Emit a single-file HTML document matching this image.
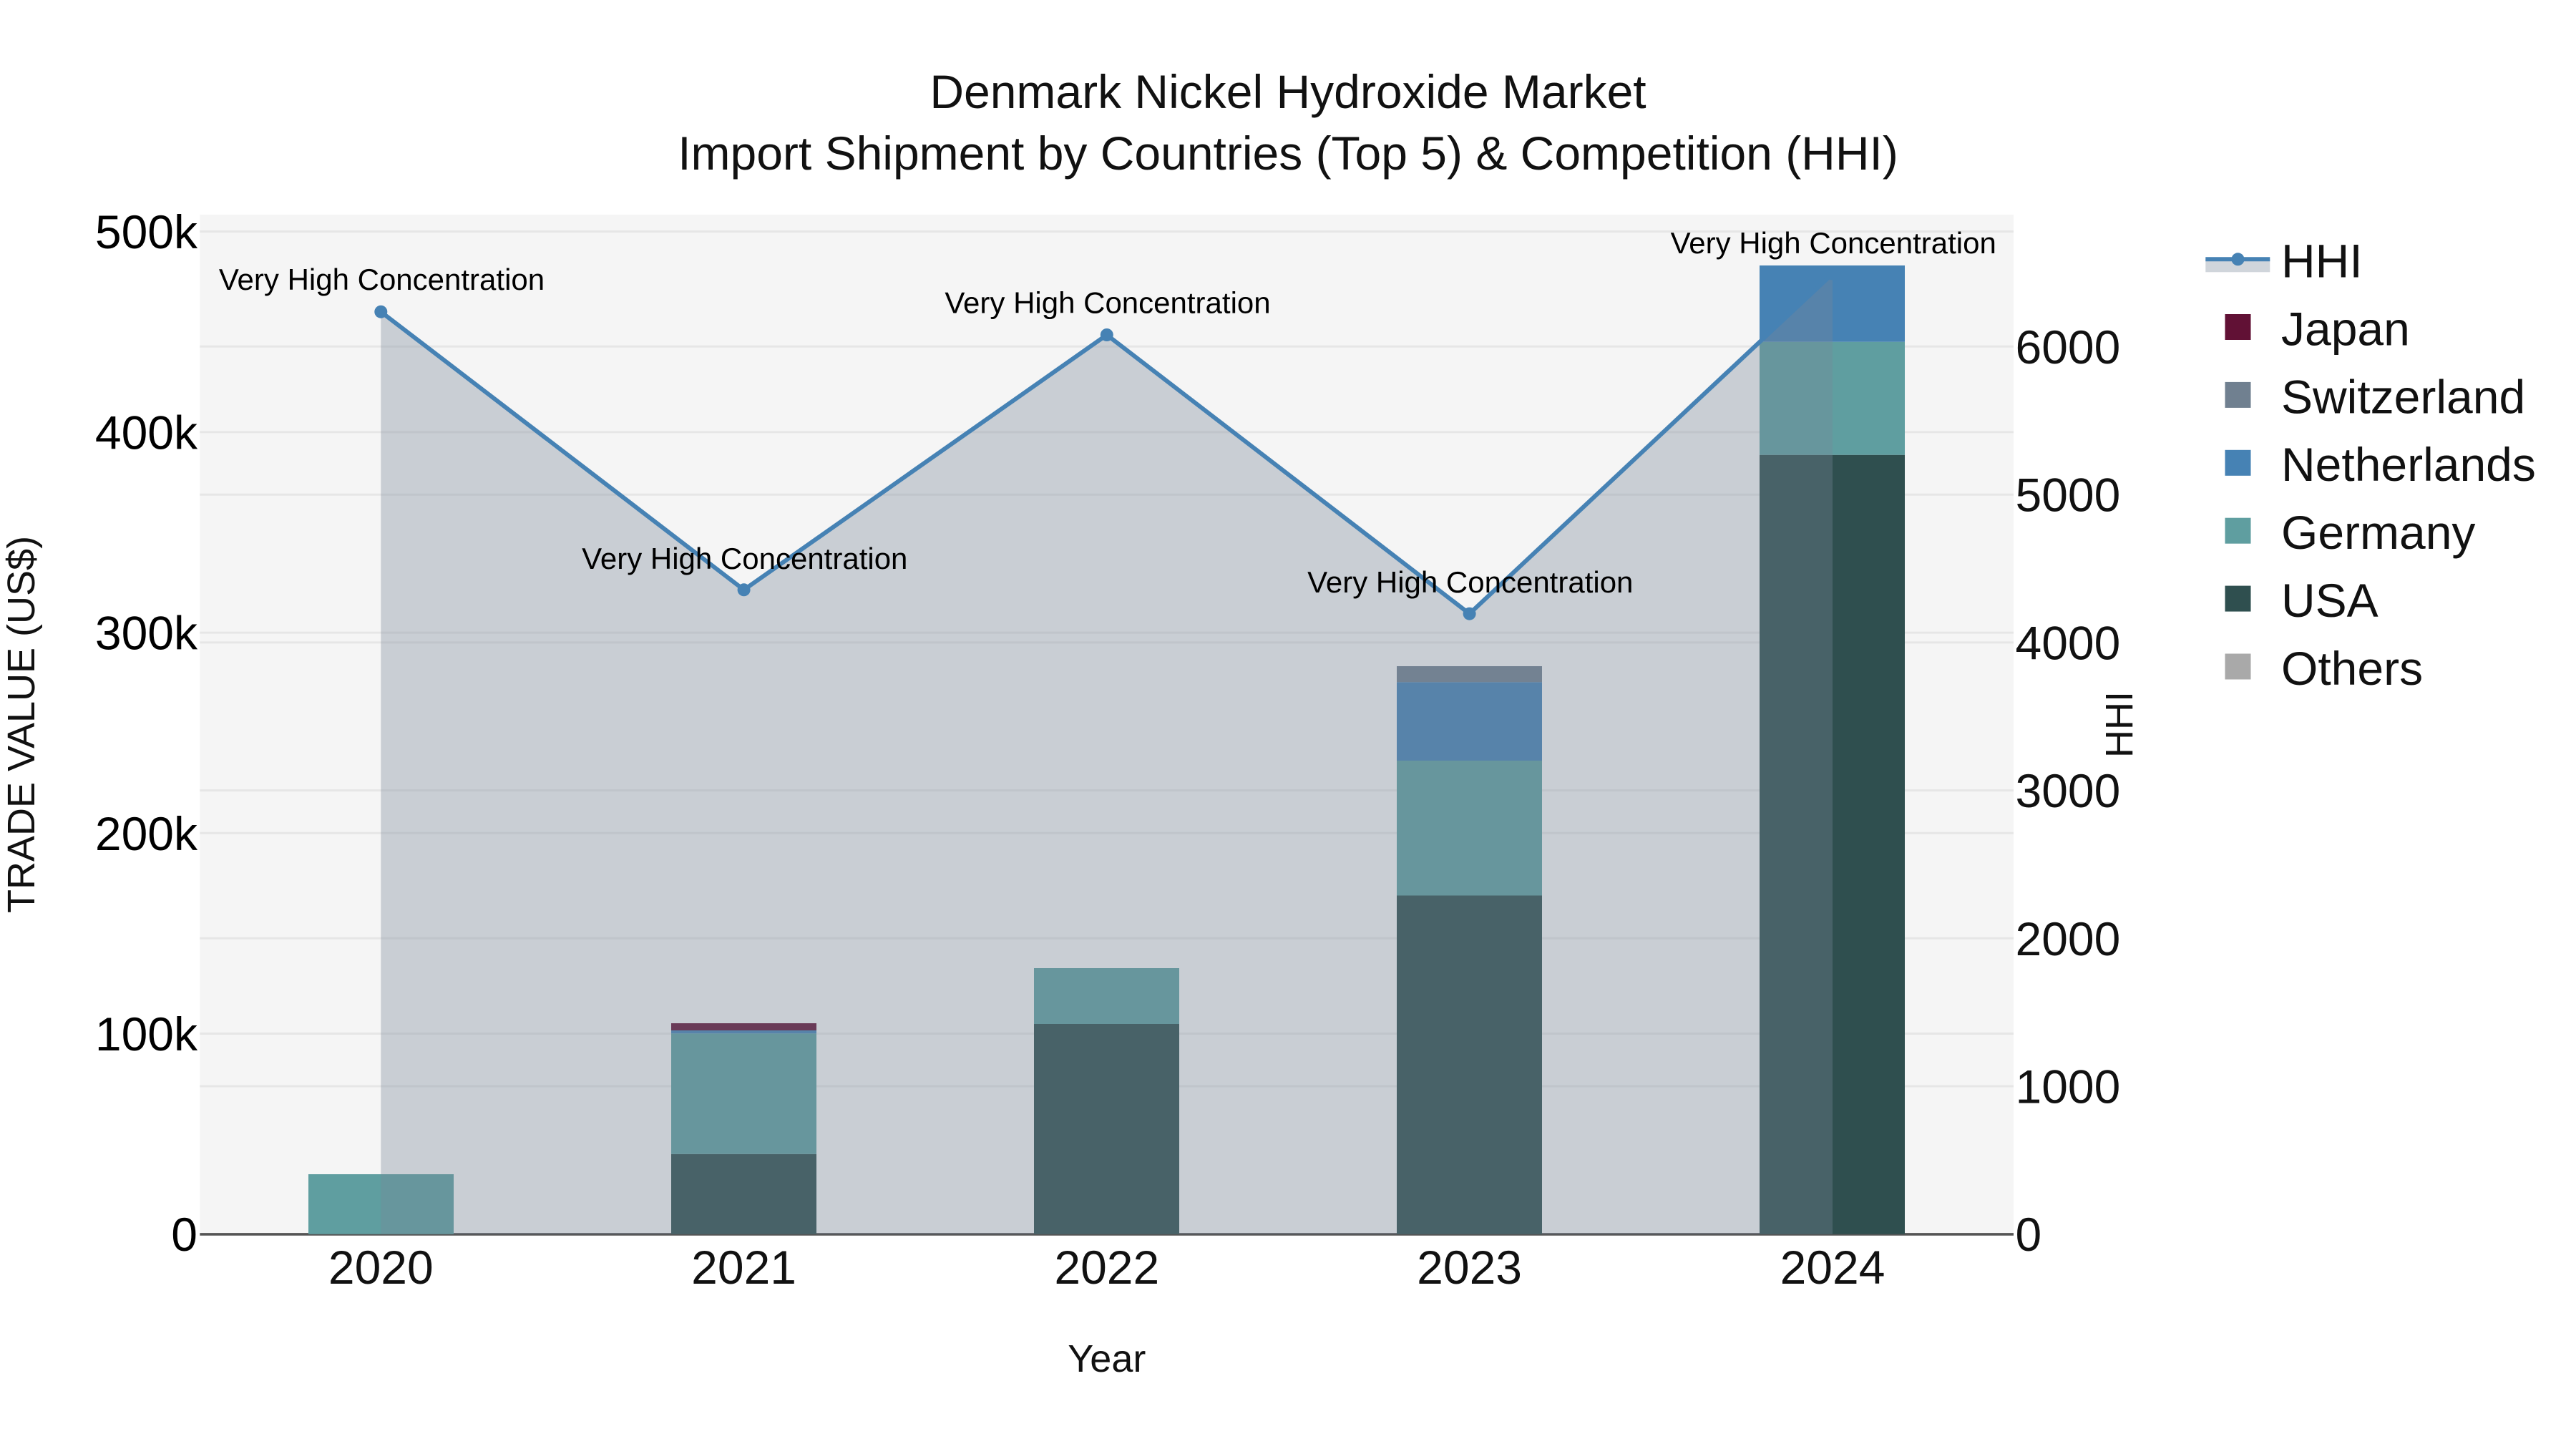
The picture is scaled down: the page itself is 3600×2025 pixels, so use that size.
<!DOCTYPE html>
<html><head><meta charset="utf-8"><style>
html,body{margin:0;padding:0;background:#fff;width:3600px;height:2025px;overflow:hidden}
svg{display:block}
text{font-family:"Liberation Sans",Arial,sans-serif}
.t{font-size:66px;fill:#111}
.a{font-size:42px;fill:#000;text-anchor:middle}
.yl{font-size:66px;fill:#000;text-anchor:end}
.yr{font-size:66px;fill:#111}
.x{font-size:66px;fill:#111;text-anchor:middle}
.l{font-size:66px;fill:#111}
.g{stroke:#e6e6e6;stroke-width:3}
</style></head><body>
<svg width="3600" height="2025" viewBox="0 0 3600 2025" xmlns="http://www.w3.org/2000/svg">
<rect width="3600" height="2025" fill="#fff"/>
<text class="t" x="1800" y="151" text-anchor="middle">Denmark Nickel Hydroxide Market</text>
<text class="t" x="1800" y="237" text-anchor="middle">Import Shipment by Countries (Top 5) &amp; Competition (HHI)</text>
<rect x="279.3" y="300" width="2534.7" height="1424.7" fill="#f5f5f5"/>
<g class="g">
<line x1="279.3" x2="2814" y1="323.5" y2="323.5"/>
<line x1="279.3" x2="2814" y1="603.9" y2="603.9"/>
<line x1="279.3" x2="2814" y1="884.1" y2="884.1"/>
<line x1="279.3" x2="2814" y1="1164.3" y2="1164.3"/>
<line x1="279.3" x2="2814" y1="1444.5" y2="1444.5"/>
<line x1="279.3" x2="2814" y1="484.3" y2="484.3"/>
<line x1="279.3" x2="2814" y1="691.2" y2="691.2"/>
<line x1="279.3" x2="2814" y1="897.9" y2="897.9"/>
<line x1="279.3" x2="2814" y1="1104.6" y2="1104.6"/>
<line x1="279.3" x2="2814" y1="1311.3" y2="1311.3"/>
<line x1="279.3" x2="2814" y1="1518" y2="1518"/>
</g>
<line x1="279.3" x2="2814" y1="1724.9" y2="1724.9" stroke="#555" stroke-width="3.6"/>
<!-- bars -->
<rect x="431" y="1641" width="203" height="83.7" fill="#5f9ea0"/>
<rect x="938" y="1612.8" width="203" height="111.9" fill="#2f4f4f"/>
<rect x="938" y="1444.3" width="203" height="168.5" fill="#5f9ea0"/>
<rect x="938" y="1440" width="203" height="4.3" fill="#4682b4"/>
<rect x="938" y="1430" width="203" height="10" fill="#611135"/>
<rect x="1445" y="1431" width="203" height="293.7" fill="#2f4f4f"/>
<rect x="1445" y="1353" width="203" height="78" fill="#5f9ea0"/>
<rect x="1952" y="1251.5" width="203" height="473.2" fill="#2f4f4f"/>
<rect x="1952" y="1063" width="203" height="188.5" fill="#5f9ea0"/>
<rect x="1952" y="953.3" width="203" height="109.7" fill="#4682b4"/>
<rect x="1952" y="931" width="203" height="22.3" fill="#708090"/>
<rect x="2459" y="635.7" width="203" height="1089" fill="#2f4f4f"/>
<rect x="2459" y="477.7" width="203" height="158" fill="#5f9ea0"/>
<rect x="2459" y="371" width="203" height="106.7" fill="#4682b4"/>
<!-- HHI area, line, markers -->
<polygon points="532.3,435.7 1039.6,824.3 1546.8,468 2053.6,857.7 2561,382.5 2561,1724.7 532.3,1724.7" fill="rgb(119,136,153)" fill-opacity="0.35"/>
<polyline points="532.3,435.7 1039.6,824.3 1546.8,468 2053.6,857.7 2561,382.5" fill="none" stroke="#4682b4" stroke-width="6" stroke-linejoin="round"/>
<g fill="#4682b4">
<circle cx="532.3" cy="435.7" r="9"/><circle cx="1039.6" cy="824.3" r="9"/><circle cx="1546.8" cy="468" r="9"/><circle cx="2053.6" cy="857.7" r="9"/><circle cx="2561" cy="382.5" r="9"/>
</g>
<!-- annotations -->
<text class="a" x="533.5" y="405">Very High Concentration</text>
<text class="a" x="1040.8" y="795">Very High Concentration</text>
<text class="a" x="1548" y="437.5">Very High Concentration</text>
<text class="a" x="2054.8" y="828">Very High Concentration</text>
<text class="a" x="2562.2" y="354">Very High Concentration</text>
<!-- left ticks -->
<text class="yl" x="276" y="347">500k</text>
<text class="yl" x="276" y="627.4">400k</text>
<text class="yl" x="276" y="907.6">300k</text>
<text class="yl" x="276" y="1187.8">200k</text>
<text class="yl" x="276" y="1468">100k</text>
<text class="yl" x="276" y="1748">0</text>
<!-- right ticks -->
<text class="yr" x="2816.5" y="507.8">6000</text>
<text class="yr" x="2816.5" y="714.7">5000</text>
<text class="yr" x="2816.5" y="921.4">4000</text>
<text class="yr" x="2816.5" y="1128.1">3000</text>
<text class="yr" x="2816.5" y="1334.8">2000</text>
<text class="yr" x="2816.5" y="1541.5">1000</text>
<text class="yr" x="2816.5" y="1748">0</text>
<!-- x ticks -->
<text class="x" x="532.3" y="1794">2020</text>
<text class="x" x="1039.6" y="1794">2021</text>
<text class="x" x="1546.8" y="1794">2022</text>
<text class="x" x="2053.6" y="1794">2023</text>
<text class="x" x="2561" y="1794">2024</text>
<!-- axis titles -->
<text x="1546.8" y="1917" font-size="54" fill="#111" text-anchor="middle">Year</text>
<text transform="translate(48,1012.5) rotate(-90)" font-size="54" fill="#111" text-anchor="middle">TRADE VALUE (US$)</text>
<text transform="translate(2980,1012.5) rotate(-90)" font-size="54" fill="#111" text-anchor="middle">HHI</text>
<!-- legend -->
<rect x="3082.3" y="362.3" width="90" height="18" fill="rgb(119,136,153)" fill-opacity="0.35"/>
<line x1="3082.3" x2="3172.3" y1="362.3" y2="362.3" stroke="#4682b4" stroke-width="6"/>
<circle cx="3127.5" cy="362.3" r="9" fill="#4682b4"/>
<rect x="3109.5" y="439" width="36" height="36" fill="#611135"/>
<rect x="3109.5" y="533.9" width="36" height="36" fill="#708090"/>
<rect x="3109.5" y="628.8" width="36" height="36" fill="#4682b4"/>
<rect x="3109.5" y="723.7" width="36" height="36" fill="#5f9ea0"/>
<rect x="3109.5" y="818.6" width="36" height="36" fill="#2f4f4f"/>
<rect x="3109.5" y="913.5" width="36" height="36" fill="#a9a9a9"/>
<text class="l" x="3188" y="387.5">HHI</text>
<text class="l" x="3188" y="482.4">Japan</text>
<text class="l" x="3188" y="577.3">Switzerland</text>
<text class="l" x="3188" y="672.2">Netherlands</text>
<text class="l" x="3188" y="767.1">Germany</text>
<text class="l" x="3188" y="862">USA</text>
<text class="l" x="3188" y="956.9">Others</text>
</svg>
</body></html>
